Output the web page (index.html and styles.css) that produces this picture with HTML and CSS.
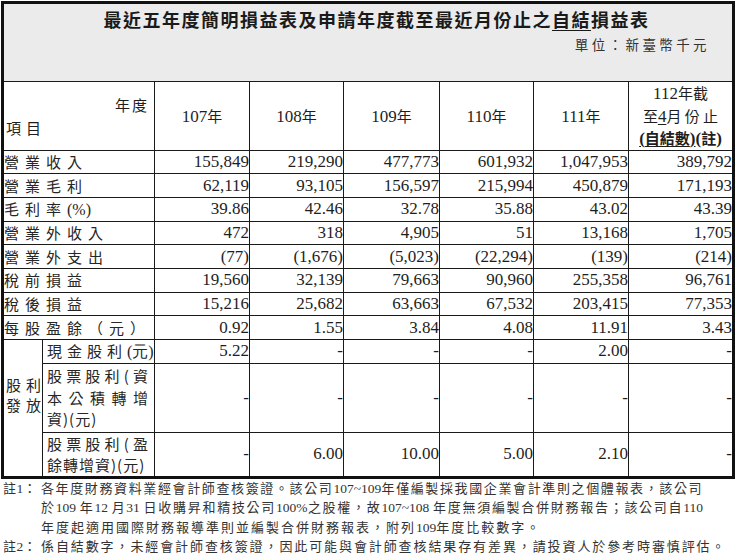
FILE: index.html
```html
<!DOCTYPE html>
<html lang="zh-Hant">
<head>
<meta charset="utf-8">
<title>最近五年度簡明損益表</title>
<link rel="stylesheet" href="styles.css">
</head>
<body>
<div class="page">
<table class="fin">
  <colgroup>
    <col class="c-a"><col class="c-b"><col class="c-y"><col class="c-y2"><col class="c-y3"><col class="c-y2"><col class="c-y"><col class="c-last">
  </colgroup>
  <tr class="title-row">
    <td colspan="8" class="title-cell">
      <div class="title">最近五年度簡明損益表及申請年度截至最近月份止之<u>自結</u>損益表</div>
      <div class="unit">單位：新臺幣千元</div>
    </td>
  </tr>
  <tr class="head-row">
    <td colspan="2" class="corner">
      <div class="corner-in"><span class="nd">年度</span><span class="xm">項目</span></div>
    </td>
    <td class="yr">107<span class="cj">年</span></td>
    <td class="yr">108<span class="cj">年</span></td>
    <td class="yr">109<span class="cj">年</span></td>
    <td class="yr">110<span class="cj">年</span></td>
    <td class="yr">111<span class="cj">年</span></td>
    <td class="yr ylast">
      <div>112<span class="cj">年截</span></div>
      <div><span class="cj">至</span><u>4</u><span class="cj">月 份 止</span></div>
      <div class="bold"><u>(<span class="cj">自結數</span>)</u>(<span class="cj">註</span>)</div>
    </td>
  </tr>
  <tr class="row"><td colspan="2" class="lab">營業收入</td><td class="num">155,849</td><td class="num">219,290</td><td class="num">477,773</td><td class="num">601,932</td><td class="num">1,047,953</td><td class="num">389,792</td></tr>
  <tr class="row"><td colspan="2" class="lab">營業毛利</td><td class="num">62,119</td><td class="num">93,105</td><td class="num">156,597</td><td class="num">215,994</td><td class="num">450,879</td><td class="num">171,193</td></tr>
  <tr class="row"><td colspan="2" class="lab">毛利率<span class="ns">(%)</span></td><td class="num">39.86</td><td class="num">42.46</td><td class="num">32.78</td><td class="num">35.88</td><td class="num">43.02</td><td class="num">43.39</td></tr>
  <tr class="row"><td colspan="2" class="lab">營業外收入</td><td class="num">472</td><td class="num">318</td><td class="num">4,905</td><td class="num">51</td><td class="num">13,168</td><td class="num">1,705</td></tr>
  <tr class="row"><td colspan="2" class="lab">營業外支出</td><td class="num">(77)</td><td class="num">(1,676)</td><td class="num">(5,023)</td><td class="num">(22,294)</td><td class="num">(139)</td><td class="num">(214)</td></tr>
  <tr class="row"><td colspan="2" class="lab">稅前損益</td><td class="num">19,560</td><td class="num">32,139</td><td class="num">79,663</td><td class="num">90,960</td><td class="num">255,358</td><td class="num">96,761</td></tr>
  <tr class="row"><td colspan="2" class="lab">稅後損益</td><td class="num">15,216</td><td class="num">25,682</td><td class="num">63,663</td><td class="num">67,532</td><td class="num">203,415</td><td class="num">77,353</td></tr>
  <tr class="row"><td colspan="2" class="lab">每股盈餘（元）</td><td class="num">0.92</td><td class="num">1.55</td><td class="num">3.84</td><td class="num">4.08</td><td class="num">11.91</td><td class="num">3.43</td></tr>
  <tr class="row">
    <td rowspan="3" class="div-lab"><span class="dl"><span>股</span><span>利</span></span><span class="dl"><span>發</span><span>放</span></span></td>
    <td class="sub">現金股利<span class="ns">(元)</span></td>
    <td class="num">5.22</td><td class="num">-</td><td class="num">-</td><td class="num">-</td><td class="num">2.00</td><td class="num">-</td>
  </tr>
  <tr class="row3">
    <td class="sub multi"><span class="jl">股票股利(資</span><span class="jl">本公積轉增</span><span class="ll">資)(元)</span></td>
    <td class="num">-</td><td class="num">-</td><td class="num">-</td><td class="num">-</td><td class="num">-</td><td class="num">-</td>
  </tr>
  <tr class="row2">
    <td class="sub multi"><span class="jl">股票股利(盈</span><span class="ll">餘轉增資)(元)</span></td>
    <td class="num">-</td><td class="num">6.00</td><td class="num">10.00</td><td class="num">5.00</td><td class="num">2.10</td><td class="num">-</td>
  </tr>
</table>
<div class="notes">
  <div class="note">
    <span class="nlab">註<span class="n">1</span>：</span>
    <div class="ntext">
      <div class="jline">各年度財務資料業經會計師查核簽證。該公司<span class="n">107~109</span>年僅編製採我國企業會計準則之個體報表，該公司</div>
      <div class="jline">於<span class="n">109 </span>年<span class="n">12 </span>月<span class="n">31 </span>日收購昇和精技公司<span class="n">100%</span>之股權，故<span class="n">107~108 </span>年度無須編製合併財務報告；該公司自<span class="n">110</span></div>
      <div class="pline">年度起適用國際財務報導準則並編製合併財務報表，附列<span class="n">109</span>年度比較數字。</div>
    </div>
  </div>
  <div class="note">
    <span class="nlab">註<span class="n">2</span>：</span>
    <div class="ntext">
      <div class="pline last">係自結數字，未經會計師查核簽證，因此可能與會計師查核結果存有差異，請投資人於參考時審慎評估。</div>
    </div>
  </div>
</div>
</div>
</body>
</html>
```

FILE: styles.css
```css
html, body {
  margin: 0;
  padding: 0;
  background: #ffffff;
}

body {
  color: #1e1e1e;
  font-family: "Liberation Serif", "Noto Sans CJK TC", serif;
}

.page {
  padding: 1px 0 0 1px;
}

.fin {
  border-collapse: collapse;
  table-layout: fixed;
  width: 734px;
  border: 3px solid #111;
}

.c-a { width: 40px; }
.c-b { width: 112px; }
.c-y { width: 95px; }
.c-y2 { width: 94px; }
.c-y3 { width: 96px; }
.c-last { width: 105px; }

.fin td {
  border: 1px solid #1a1a1a;
  padding: 0;
}

.cj {
  font-family: "Noto Sans CJK TC", sans-serif;
  font-size: 15px;
}

/* title */
.title-cell {
  background: #ebebeb;
  height: 77px;
  vertical-align: top;
}

.title {
  font-family: "Liberation Serif", "Noto Sans CJK TC", serif;
  font-size: 18px;
  font-weight: 700;
  letter-spacing: 1.5px;
  line-height: 24px;
  text-align: center;
  padding: 5px 0 0 17px;
  color: #1a1a1a;
}

.title u {
  text-underline-offset: 3px;
  text-decoration-thickness: 1px;
}

.unit {
  font-family: "Noto Sans CJK TC", sans-serif;
  font-size: 13.5px;
  letter-spacing: 3.4px;
  line-height: 22px;
  text-align: right;
  padding-right: 22px;
  color: #333;
}

/* header row */
.head-row {
  height: 67px;
}

.corner-in {
  display: flex;
  flex-direction: column;
  justify-content: flex-end;
  height: 67px;
  box-sizing: border-box;
  padding: 0 5px 10px 2px;
  font-family: "Noto Sans CJK TC", sans-serif;
  font-size: 15px;
  line-height: 23px;
}

.nd {
  align-self: flex-end;
  letter-spacing: 2px;
}

.xm {
  align-self: flex-start;
  letter-spacing: 5px;
}

.yr {
  text-align: center;
  vertical-align: middle;
  font-size: 17px;
}

.ylast {
  line-height: 21.5px;
  padding-top: 1px;
}

.ylast u {
  text-underline-offset: 2px;
}

.bold {
  font-weight: 700;
}

/* data rows */
.row {
  height: 23.7px;
}

.row3 {
  height: 69px;
}

.row2 {
  height: 45px;
}

.lab {
  font-family: "Noto Sans CJK TC", sans-serif;
  font-size: 15px;
  letter-spacing: 6px;
  line-height: 20px;
  padding-left: 3px;
  white-space: nowrap;
  color: #262626;
}

.ns {
  font-family: "Liberation Serif", serif;
  letter-spacing: 0;
  font-size: 16px;
}

.num {
  text-align: right;
  padding-right: 6px;
  font-size: 17px;
  line-height: 20px;
  vertical-align: middle;
}

.fin td.div-lab {
  font-family: "Noto Sans CJK TC", sans-serif;
  font-size: 15px;
  padding: 0 1px 26px 2px;
  vertical-align: middle;
  white-space: nowrap;
  color: #262626;
}

.dl {
  display: flex;
  justify-content: space-between;
  height: 20px;
  line-height: 20px;
}

.sub {
  font-family: "Noto Sans CJK TC", sans-serif;
  font-size: 15px;
  letter-spacing: 5px;
  line-height: 20px;
  white-space: nowrap;
  color: #262626;
}

.fin td.sub {
  padding-left: 4px;
}

.fin td.sub.multi {
  letter-spacing: 0;
  padding-right: 6px;
  line-height: 21.5px;
}

.jl {
  display: block;
  text-align: justify;
  text-align-last: justify;
}

.ll {
  display: block;
  text-align: left;
  letter-spacing: 1px;
}

/* footnotes */
.notes {
  font-family: "Liberation Serif", "Noto Sans CJK TC", serif;
  font-size: 13px;
  letter-spacing: 2px;
  line-height: 19.5px;
  color: #333;
  white-space: nowrap;
  padding-left: 2px;
}

.n {
  letter-spacing: 0;
  font-size: 13.5px;
}

.note {
  display: flex;
}

.nlab {
  flex: none;
  width: 38px;
  letter-spacing: 0.5px;
}

.ntext {
  width: 662px;
}

.jline {
  white-space: normal;
  letter-spacing: 1.4px;
  text-align: justify;
  text-align-last: justify;
}

.pline {
  letter-spacing: 2px;
}

.pline.last {
  letter-spacing: 1.9px;
}
```
